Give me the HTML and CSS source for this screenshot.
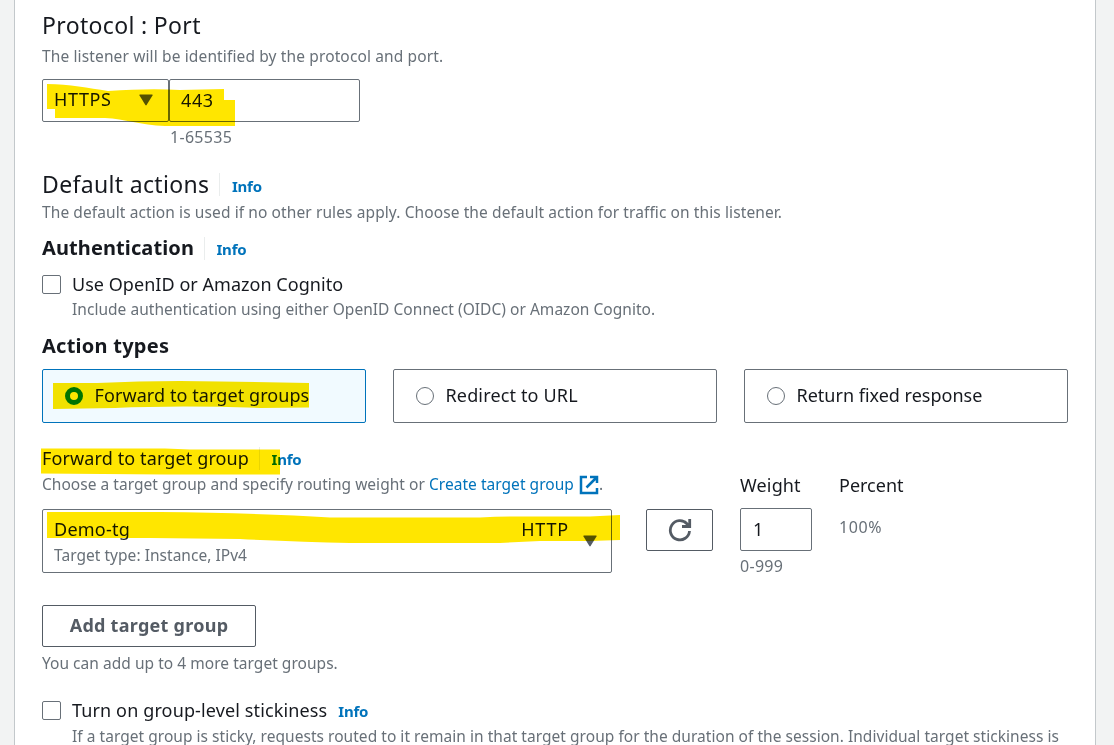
FILE: index.html
```html
<!DOCTYPE html>
<html lang="en">
<head>
<meta charset="utf-8">
<title>Listener settings</title>
<link rel="stylesheet" href="styles.css">
</head>
<body>
<main class="panel">
  <section class="protocol">
    <h2 class="title title-protocol"><span>Protocol : Port</span></h2>
    <p class="hint hint-listener">The listener will be identified by the protocol and port.</p>
    <div class="port-row">
      <div class="select"><span class="t-https">HTTPS</span><svg class="caret" viewBox="0 0 14 12"><path d="M1 .5h12q1 0 .5 1L7.600 11q-.6.8-1.200 0L.5 1.500Q0 .5 1 .5z"/></svg></div>
      <div class="input port">443</div>
    </div>
    <p class="hint digits port-range">1-65535</p>
  </section>

  <section class="defaults">
    <div class="heading heading-default"><h2 class="title title-default">Default actions</h2><i class="divider"></i><a class="info">Info</a></div>
    <p class="hint hint-default">The default action is used if no other rules apply. Choose the default action for traffic on this listener.</p>
    <div class="heading heading-auth"><h3 class="bold t-auth">Authentication</h3><i class="divider"></i><a class="info">Info</a></div>
    <div class="check"><i class="box"></i><span class="label t-openid">Use OpenID or Amazon Cognito</span></div>
    <p class="hint indent hint-oidc">Include authentication using either OpenID Connect (OIDC) or Amazon Cognito.</p>
    <h3 class="bold t-types">Action types</h3>
    <div class="cards">
      <div class="card selected"><i class="radio on"></i><span class="label t-forward">Forward to target groups</span></div>
      <div class="card"><i class="radio"></i><span class="label t-redirect">Redirect to URL</span></div>
      <div class="card"><i class="radio"></i><span class="label t-return">Return fixed response</span></div>
    </div>
  </section>

  <section class="target">
    <div class="target-main">
      <div class="heading heading-target"><span class="label t-group">Forward to target group</span><i class="divider"></i><a class="info">Info</a></div>
      <p class="hint choose"><span class="t-choose">Choose a target group and specify routing weight or </span><a class="link">Create target group</a><svg class="external" viewBox="0 0 20 20"><path d="M8 2H2v16h16v-5M11 2h7v6M17.500 2.500L7.500 12.500"/></svg>.</p>
      <div class="target-select">
        <div class="target-name"><span class="t-demo">Demo-tg</span><span class="t-http">HTTP</span></div>
        <span class="hint t-type">Target type: Instance, IPv4</span>
        <svg class="caret" viewBox="0 0 14 12"><path d="M1 .5h12q1 0 .5 1L7.600 11q-.6.8-1.200 0L.5 1.500Q0 .5 1 .5z"/></svg>
      </div>
    </div>
    <div class="refresh"><svg viewBox="0 0 24 24"><path d="M21.500 13A9.600 9.600 0 1 1 19 5.800M21.700 1v7.500H14M21 8L16.500 3.500"/></svg></div>
    <div class="weight"><span class="label t-weight">Weight</span><div class="input">1</div><span class="hint digits t-999">0-999</span></div>
    <div class="percent"><span class="label t-percent">Percent</span><span class="hint digits t-100">100%</span></div>
  </section>

  <div class="add"><span>Add target group</span></div>
  <p class="hint hint-add">You can add up to 4 more target groups.</p>
  <div class="check sticky"><i class="box"></i><span class="label t-sticky">Turn on group-level stickiness</span><a class="info">Info</a></div>
  <p class="hint indent hint-sticky">If a target group is sticky, requests routed to it remain in that target group for the duration of the session. Individual target stickiness is</p>
</main>
<svg class="marker" viewBox="0 0 1114 745">
  <path d="M47 84C70 84 88 88 108 91Q150 88 180 90L224 89V100H235V126H165C140 125 125 119 105 118H55V109H47z"/>
  <path d="M53 383H97Q160 380 220 381.500L309 383V407.500L260 408Q180 405 115 408L53 409z"/>
  <path d="M41 448.500H165L190 449.500H280V474.500H165L41 473.500z"/>
  <path d="M47 512H160Q260 513 330 517.500H480Q505 516 530 516.500H590L620 515V540L590 541H540L500 543H350Q300 542 240 539L150 538H47z"/>
</svg>
</body>
</html>
```
FILE: styles.css
```css
* { box-sizing: border-box; }
body {
  margin: 0;
  height: 745px;
  overflow: hidden;
  background: #f2f3f3;
  color: #16191f;
  font: 18px/24px "Noto Sans", sans-serif;
}
h2, h3, p { margin: 0; font-weight: 400; }
i { display: block; flex: none; }
p, span, h2, h3 { white-space: nowrap; }
.panel {
  height: 745px;
  margin: 0 18px 0 14px;
  padding: 11px 27px 0;
  background: #fff;
  border: solid #c3c8cb;
  border-width: 0 1px;
}
.title { font-size: 23px; line-height: 28px; letter-spacing: .34px; }
.hint { color: #687078; font-size: 15.5px; line-height: 20px; letter-spacing: .035px; }
.digits { font-size: 16px; letter-spacing: .3px; }
.bold { font-size: 20px; font-weight: 700; line-height: 26px; }
.info { color: #0073bb; font-size: 15px; font-weight: 700; letter-spacing: -.2px; }
.link { color: #0073bb; }
.hint-listener { margin-top: 7px; letter-spacing: .13px; }
.port-row { display: flex; margin-top: 13px; height: 43px; }
.select, .input {
  display: flex;
  align-items: center;
  border: 1px solid #687078;
  border-radius: 2px;
}
.select { width: 127px; padding: 0 15px 3px 11px; justify-content: space-between; }
.t-https { letter-spacing: .6px; }
.caret { width: 14px; height: 12px; fill: #545b64; }
.select .caret { margin-top: 2px; }
.port { width: 191px; padding: 0 11px 2px; letter-spacing: .6px; }
.port-range { margin: 5px 0 0 128px; }
.heading { display: flex; align-items: center; }
.divider { width: 1px; height: 23px; margin: 0 11.5px 0 10px; background: #eaeded; }
.heading .info { padding-top: 4px; }
.heading-default { margin-top: 23px; height: 28px; }
.hint-default { margin-top: 4px; letter-spacing: .1px; }
.heading-auth { margin-top: 13px; height: 26px; }
.heading-auth .info, .heading-target .info { padding-top: 1px; }
.t-auth { letter-spacing: .1px; }
.check { display: flex; align-items: center; margin-top: 11px; height: 24px; }
.box { width: 19px; height: 19px; margin-right: 11px; border: 1px solid #687078; border-radius: 2px; }
.t-openid { letter-spacing: .04px; }
.indent { margin-left: 30px; }
.hint-oidc { margin-top: 3px; }
.t-types { margin-top: 14px; letter-spacing: .25px; }
.cards { display: grid; grid-template-columns: repeat(3, 324px); gap: 27px; margin-top: 10px; }
.card {
  display: flex;
  align-items: center;
  height: 54px;
  padding-left: 22px;
  border: 1px solid #687078;
  border-radius: 2px;
}
.card .label { margin-top: -2px; }
.selected { background: #f1faff; border-color: #0073bb; }
.radio { width: 18px; height: 18px; margin-right: 11.5px; border: 1px solid #687078; border-radius: 50%; }
.on { border: 5px solid #0080bb; background: #fff; }
.t-forward { letter-spacing: .08px; }
.t-redirect { letter-spacing: .15px; }
.target { display: flex; height: 127px; margin-top: 23px; }
.target-main { width: 570px; }
.heading-target { height: 24px; }
.t-group { letter-spacing: .12px; }
.choose { display: flex; align-items: center; height: 20px; margin-top: 4px; }
.t-choose { white-space: pre; }
.external { width: 20px; height: 20px; margin: 1px 0 0 5px; fill: none; stroke: #0073bb; stroke-width: 2.500; }
.target-select {
  position: relative;
  height: 64px;
  margin-top: 15px;
  padding: 7px 42px 0 11px;
  border: 1px solid #687078;
  border-radius: 2px;
}
.target-name { display: flex; justify-content: space-between; }
.t-demo { letter-spacing: .25px; }
.t-http { letter-spacing: .8px; }
.t-type { display: block; margin-top: 4px; }
.target-select .caret { position: absolute; right: 14px; top: 25px; }
.refresh {
  display: grid;
  place-items: center;
  width: 67px;
  height: 42px;
  margin: 63px 0 0 34px;
  border: 1px solid #545b64;
  border-radius: 2px;
}
.refresh svg { width: 24px; height: 24px; fill: none; stroke: #545b64; stroke-width: 2.800; }
.weight { display: flex; flex-direction: column; width: 72px; margin: 27px 0 0 27px; }
.t-weight { letter-spacing: .15px; }
.weight .input { flex: none; height: 43px; margin-top: 11px; padding: 0 0 1px 12px; }
.t-999 { flex: none; margin-top: 5px; }
.percent { display: flex; flex-direction: column; margin: 27px 0 0 27px; }
.t-100 { margin-top: 20px; letter-spacing: .6px; }
.add {
  display: grid;
  place-items: center;
  width: 214px;
  height: 42px;
  margin-top: 32px;
  padding-bottom: 2px;
  border: 1px solid #545b64;
  border-radius: 2px;
  color: #545b64;
  font-weight: 700;
  letter-spacing: .27px;
}
.hint-add { margin-top: 6px; }
.sticky { margin-top: 25px; }
.t-sticky { letter-spacing: .13px; }
.sticky .info { margin-left: 11px; padding-top: 1px; }
.hint-sticky { margin-top: 4px; }
.marker {
  position: absolute;
  left: 0;
  top: 0;
  width: 1114px;
  height: 745px;
  fill: #ffe600;
  mix-blend-mode: multiply;
  pointer-events: none;
}
```
